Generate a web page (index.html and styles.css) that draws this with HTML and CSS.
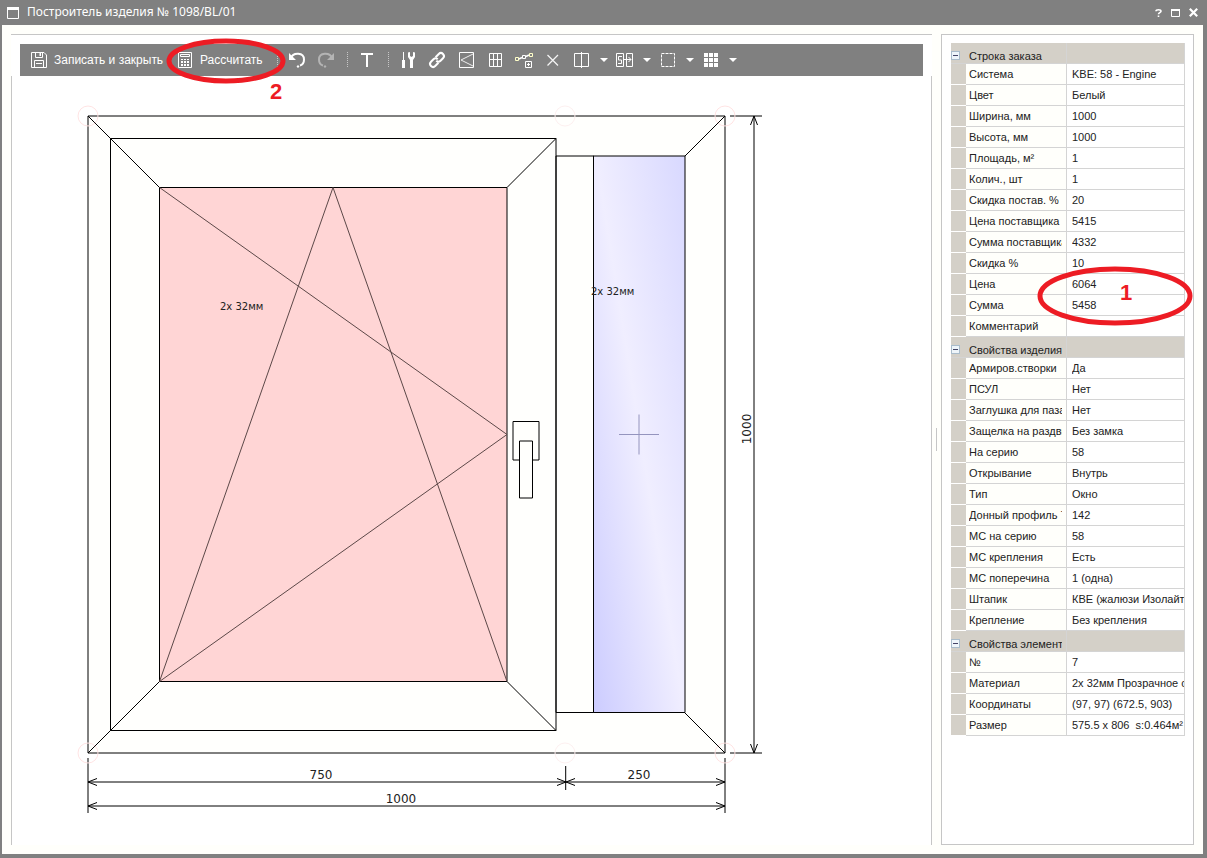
FILE: index.html
```
<!DOCTYPE html>
<html lang="ru">
<head>
<meta charset="utf-8">
<title>Построитель изделия № 1098/BL/01</title>
<link rel="stylesheet" href="styles.css">
</head>
<body>
<div class="window">
  <header class="titlebar">
    <svg class="title-icon" width="12" height="12" viewBox="0 0 12 12"><path d="M.5.5h11v11H.5z" fill="none" stroke="#fff"/><path d="M0 0h12v3H0z" fill="#fff"/></svg>
    <h1 class="title">Построитель изделия № 1098/BL/01</h1>
    <button class="win-btn" aria-label="Справка"><svg width="7" height="8" viewBox="0 0 7 8"><path d="M1 2.3C1 .3 6 .3 6 2.3 6 3.6 3.5 3.6 3.5 5.2M3.5 6.4V8" fill="none" stroke="#fff" stroke-width="1.6"/></svg></button>
    <button class="win-btn" aria-label="Развернуть"><svg width="9" height="8" viewBox="0 0 9 8"><path d="M.5.5h8v7h-8z" fill="none" stroke="#fff"/><path d="M0 0h9v2H0z" fill="#fff"/></svg></button>
    <button class="win-btn" aria-label="Закрыть"><svg width="9" height="9" viewBox="0 0 9 9"><path d="M.8.8l7.4 7.4M8.2.8L.8 8.2" stroke="#fff" stroke-width="2.2"/></svg></button>
  </header>
  <main class="content">
    <section class="editor">
      <div class="toolbar" role="toolbar">
        <button class="tool tool-save"><svg class="icon" viewBox="0 0 21 20"><path d="M2.5 2.5H15L17.500 5V17.500H2.500z" fill="none" stroke="#fff"/><path d="M6.500 2.500V7.500H13.500V2.500M5.500 17.500V10.500H14.500V17.500M7 13.500h6" fill="none" stroke="#fff"/><path d="M10.500 3h1.500v3h-1.500z" fill="#fff"/></svg><span>Записать и закрыть</span></button>
        <button class="tool tool-calc"><svg class="icon" viewBox="0 0 21 20"><path d="M3.500 2.500h13v15h-13z" fill="none" stroke="#fff"/><path d="M5.500 4.500h9v2h-9z" fill="none" stroke="#fff"/><path d="M6 9h2v1H6zM9 9h2v1H9zM12 9h2v1h-2zM6 11h2v2H6zM9 11h2v2H9zM12 11h2v2h-2zM6 14h2v2H6zM9 14h2v2H9zM12 14h2v2h-2z" fill="#fff"/></svg><span>Рассчитать</span>
          <svg class="mark mark-calc" width="120" height="48" viewBox="0 0 120 48"><ellipse cx="60" cy="24" rx="57" ry="20" fill="none" stroke="#ed1c24" stroke-width="5"/></svg>
          <span class="mark-num num-calc">2</span>
        </button>
        <span class="sep"></span>
        <button class="tool" aria-label="Отменить"><svg class="icon" viewBox="0 0 21 20"><path d="M4 8C6 2 17 2 17 9.500C17 13 15 15 13 15.500" fill="none" stroke="#fff" stroke-width="2"/><path d="M2 3v7h7zM11 15l1.500 1.500L11 18l-1.500-1.500z" fill="#fff"/></svg></button>
        <button class="tool" aria-label="Вернуть"><svg class="icon" viewBox="0 0 21 20"><path d="M16 8C14 2 3 2 3 9.500C3 13 5 15 7 15.500" fill="none" stroke="#b4b4b4" stroke-width="2"/><path d="M18 3v7h-7zM9 15l1.500 1.500L9 18l-1.500-1.500z" fill="#b4b4b4"/></svg></button>
        <span class="sep"></span>
        <button class="tool" aria-label="Текст"><svg class="icon" viewBox="0 0 21 20"><path d="M4 4h12M10 4v13" fill="none" stroke="#fff" stroke-width="2"/></svg></button>
        <span class="sep"></span>
        <button class="tool" aria-label="Инструменты"><svg class="icon" viewBox="0 0 21 20"><path d="M5 2h1v8H5zM4 10h3v8H4zM12 9h3v9h-3z" fill="#fff"/><path d="M10 2.500L10 7l2 3h3l2-3V2.500L15 2v4l-1.500 1L12 6V2z" fill="#fff"/></svg></button>
        <button class="tool" aria-label="Связь"><svg class="icon" viewBox="0 0 21 20"><g fill="none" stroke="#fff" stroke-width="2" transform="rotate(-45 10 10)"><path d="M9 13H4.500a3 3 0 0 1 0-6H8a3 3 0 0 1 3 3"/><path d="M11 7h4.500a3 3 0 0 1 0 6H12a3 3 0 0 1-3-3"/></g></svg></button>
        <button class="tool" aria-label="Открывание"><svg class="icon" viewBox="0 0 21 20"><path d="M3.500 2.500h14v15h-14z" fill="none" stroke="#fff"/><path d="M17 4L5 10l12 6" fill="none" stroke="#eee"/></svg></button>
        <button class="tool" aria-label="Раскладка"><svg class="icon" viewBox="0 0 21 20"><path d="M4.500 3.500h12v13h-12zM8.500 3.500v13M12.500 3.500v13M4.500 9.500h12" fill="none" stroke="#fff"/></svg></button>
        <button class="tool" aria-label="Добавить узел"><svg class="icon" viewBox="0 0 21 20"><path d="M5 9l3-1.500M12 6.500L15 5" stroke="#fff" stroke-width="1.500"/><path d="M8.500 5.500h3v3h-3zM11.500 11.500h6v6h-6zM14.500 13v3M13 14.500h3" fill="none" stroke="#fff"/><path d="M1.500 7.500h3v3h-3zM15.500 3.500h3v3h-3z" fill="none" stroke="#ffffc8"/></svg></button>
        <button class="tool" aria-label="Удалить"><svg class="icon" viewBox="0 0 21 20"><path d="M4.500 5L15 15.500M15 5L4.500 15.500" stroke="#f4f4f4" stroke-width="1.300"/></svg></button>
        <button class="tool" aria-label="Разделить"><svg class="icon" viewBox="0 0 21 20"><path d="M2.500 3.500h14v13h-14zM9.500 2v16" fill="none" stroke="#fff"/></svg></button>
        <button class="caret" aria-label="Варианты деления"></button>
        <button class="tool" aria-label="Сдвиг"><svg class="icon" viewBox="0 0 21 20"><path d="M1.500 3.500h7v13h-7zM11.500 3.500h6v13h-6zM7 6.500H3.500v3.500H6.500v3.500H3M8 9.500h8M13.500 7l2.500 2.500-2.500 2.500" fill="none" stroke="#fff"/></svg></button>
        <button class="caret" aria-label="Варианты сдвига"></button>
        <button class="tool" aria-label="Выделение"><svg class="icon" viewBox="0 0 21 20"><path d="M3.500 3.500h13v13h-13z" fill="none" stroke="#fff" stroke-dasharray="3 1"/></svg></button>
        <button class="caret" aria-label="Варианты выделения"></button>
        <button class="tool" aria-label="Сетка"><svg class="icon" viewBox="0 0 21 20"><path d="M3 3h4v4H3zM8 3h4v4H8zM13 3h4v4h-4zM3 8h4v4H3zM8 8h4v4H8zM13 8h4v4h-4zM3 13h4v4H3zM8 13h4v4H8zM13 13h4v4h-4z" fill="#fff"/></svg></button>
        <button class="caret" aria-label="Варианты сетки"></button>
      </div>
      <div class="canvas">
        <svg class="drawing" viewBox="12 76 919 769">
          <defs><linearGradient id="glass" gradientUnits="userSpaceOnUse" x1="552" y1="448" x2="728" y2="420"><stop offset="0" stop-color="#ccccff"/><stop offset=".5" stop-color="#f0eeff"/><stop offset="1" stop-color="#d8d8ff"/></linearGradient></defs>
          <g class="line">
            <path class="frame" d="M88 116H725V753H88z"/>
            <path d="M88 116L160 188M725 116L685 156M88 753L160 681M725 753L685 713"/>
            <path class="frame" d="M556 156H594V712.500H556zM110.500 138.500H556V730.500H110.500z"/>
            <path d="M110.500 138.500L160 188M556 138.500L507 187.500M110.500 730.500L160 681M556 730.500L507 681.500"/>
            <path fill="#ffd5d5" d="M159.500 187.500H507V681.500H159.500z"/>
            <path fill="url(#glass)" d="M593.500 156H685V712.500H593.500z"/>
            <path class="opening" d="M159.500 681.500L333 187.500L507 681.500M159.500 187.500L507 434.500L159.500 681.500"/>
            <path class="frame" d="M513 421.500H539V460H513z"/>
            <path class="frame" d="M519.500 441H532.500V498H519.500z"/>
            <path d="M730 116H762M730 753H762M754 116V753M88 758V813M725 758V813M565.700 766V790M88 782H725M88 806H725"/>
            <path d="M750.500 125L754 116L757.500 125M750.500 744L754 753L757.500 744M97 778.500L88 782L97 785.500M97 802.500L88 806L97 809.500M716 778.500L725 782L716 785.500M716 802.500L725 806L716 809.500M557 778.500L566 782L557 785.500M575 778.500L566 782L575 785.500"/>
          </g>
          <path d="M619 434.500H659M639 414.500V454.500" stroke="#9494be"/>
          <g fill="none" stroke="#ffe4e4"><circle cx="88" cy="116" r="10"/><circle cx="725" cy="116" r="10"/><circle cx="88" cy="753" r="10"/><circle cx="725" cy="753" r="10"/></g>
          <g fill="none" stroke="#fdf0f0"><circle cx="565" cy="116" r="10"/><circle cx="565" cy="753" r="10"/></g>
          <g class="dim" text-anchor="middle"><text x="321" y="779">750</text><text x="639" y="779">250</text><text x="401" y="803">1000</text><text transform="translate(751 429) rotate(-90)">1000</text></g>
          <g class="glass-label"><text x="220" y="310">2x 32мм</text><text x="591" y="295">2x 32мм</text></g>
        </svg>
      </div>
    </section>
    <div class="splitter"></div>
    <aside class="props">
      <table class="grid">
        <colgroup><col class="col-gutter"><col class="col-name"><col class="col-value"></colgroup>
        <tbody>
          <tr class="group"><td><button class="fold" aria-label="Свернуть"></button></td><th><div>Строка заказа</div></th><td></td></tr>
          <tr><td></td><th><div>Система</div></th><td><div>KBE: 58 - Engine</div></td></tr>
          <tr><td></td><th><div>Цвет</div></th><td><div>Белый</div></td></tr>
          <tr><td></td><th><div>Ширина, мм</div></th><td><div>1000</div></td></tr>
          <tr><td></td><th><div>Высота, мм</div></th><td><div>1000</div></td></tr>
          <tr><td></td><th><div>Площадь, м²</div></th><td><div>1</div></td></tr>
          <tr><td></td><th><div>Колич., шт</div></th><td><div>1</div></td></tr>
          <tr><td></td><th><div>Скидка постав. %</div></th><td><div>20</div></td></tr>
          <tr><td></td><th><div>Цена поставщика</div></th><td><div>5415</div></td></tr>
          <tr><td></td><th><div>Сумма поставщика</div></th><td><div>4332</div></td></tr>
          <tr><td></td><th><div>Скидка %</div></th><td><div>10</div></td></tr>
          <tr><td></td><th><div>Цена</div></th><td class="marked"><div>6064</div>
            <svg class="mark mark-price" width="156" height="62" viewBox="0 0 156 62"><ellipse cx="78" cy="31" rx="75" ry="27" fill="none" stroke="#ed1c24" stroke-width="5"/></svg>
            <span class="mark-num num-price">1</span></td></tr>
          <tr><td></td><th><div>Сумма</div></th><td><div>5458</div></td></tr>
          <tr><td></td><th><div>Комментарий</div></th><td></td></tr>
        </tbody>
        <tbody>
          <tr class="group"><td><button class="fold" aria-label="Свернуть"></button></td><th><div>Свойства изделия</div></th><td></td></tr>
          <tr><td></td><th><div>Армиров.створки</div></th><td><div>Да</div></td></tr>
          <tr><td></td><th><div>ПСУЛ</div></th><td><div>Нет</div></td></tr>
          <tr><td></td><th><div>Заглушка для паза</div></th><td><div>Нет</div></td></tr>
          <tr><td></td><th><div>Защелка на раздви</div></th><td><div>Без замка</div></td></tr>
          <tr><td></td><th><div>На серию</div></th><td><div>58</div></td></tr>
          <tr><td></td><th><div>Открывание</div></th><td><div>Внутрь</div></td></tr>
          <tr><td></td><th><div>Тип</div></th><td><div>Окно</div></td></tr>
          <tr><td></td><th><div>Донный профиль 7</div></th><td><div>142</div></td></tr>
          <tr><td></td><th><div>МС на серию</div></th><td><div>58</div></td></tr>
          <tr><td></td><th><div>МС крепления</div></th><td><div>Есть</div></td></tr>
          <tr><td></td><th><div>МС поперечина</div></th><td><div>1 (одна)</div></td></tr>
          <tr><td></td><th><div>Штапик</div></th><td><div>КВЕ (жалюзи Изолайт)</div></td></tr>
          <tr><td></td><th><div>Крепление</div></th><td><div>Без крепления</div></td></tr>
        </tbody>
        <tbody>
          <tr class="group"><td><button class="fold" aria-label="Свернуть"></button></td><th><div>Свойства элемента</div></th><td></td></tr>
          <tr><td></td><th><div>№</div></th><td><div>7</div></td></tr>
          <tr><td></td><th><div>Материал</div></th><td><div>2x 32мм Прозрачное ст</div></td></tr>
          <tr><td></td><th><div>Координаты</div></th><td><div>(97, 97) (672.5, 903)</div></td></tr>
          <tr><td></td><th><div>Размер</div></th><td><div>575.5 x 806&nbsp; s:0.464м²</div></td></tr>
        </tbody>
      </table>
    </aside>
  </main>
</div>
</body>
</html>
```
FILE: styles.css
```
* { box-sizing: border-box; }
body {
  margin: 0;
  background: #808080;
  font: 11px/14px "Liberation Sans", Arial, sans-serif;
  color: #222;
}
button { border: 0; padding: 0; background: none; font: inherit; color: inherit; }
svg { display: block; flex: none; }

.window { display: flex; flex-direction: column; min-height: 100vh; padding: 0 4px 4px 2px; }
.titlebar { display: flex; align-items: center; gap: 9px; height: 25px; padding: 0 5px; color: #fff; }
.title { flex: 1; margin: 0 0 2px -1px; font: 12px/16px "Noto Sans", sans-serif; white-space: nowrap; }

.content { flex: 1; display: flex; padding: 9px; background: #fffffb; }
.editor { flex: 1; min-width: 0; display: flex; flex-direction: column; padding-top: 9px; border-top: 1px solid #c6c6c6; background: #fff; }
.toolbar { display: flex; align-items: stretch; height: 32px; margin: 0 9px; background: #808080; color: #fff; }
.tool { position: relative; display: flex; align-items: center; justify-content: center; gap: 4px; width: 29px; flex: none; white-space: nowrap; font-size: 12px; }
.tool-save { width: 151px; padding-left: 9px; justify-content: flex-start; }
.tool-calc { width: 100px; padding-left: 4px; justify-content: flex-start; }
.icon { width: 21px; height: 20px; }
.sep { width: 12px; margin: 8px 0 9px; flex: none; background: repeating-linear-gradient(#c8c8c8 0 1px, transparent 1px 2px) center / 1px 100% no-repeat; }
.caret { width: 14px; flex: none; display: flex; align-items: center; justify-content: center; }
.caret::before { content: ""; border: 4px solid transparent; border-top-color: #fff; border-bottom: 0; }

.canvas { flex: 1; display: flex; border: solid #c6c6c6; border-width: 0 1px; }
.drawing { flex: 1; min-width: 0; width: 100%; }
.line { fill: none; stroke: #000; }
.frame { fill: #fffffd; }
.opening { stroke: #5c4848; stroke-width: 1; }
.dim { font: 12px "DejaVu Sans", sans-serif; fill: #222; }
.glass-label { font: 10px "DejaVu Sans", sans-serif; fill: #222; }

.splitter { width: 9px; flex: none; align-self: center; height: 23px; background: linear-gradient(#c6c6c6, #c6c6c6) center / 1px 100% no-repeat; }

.props { width: 253px; flex: none; padding: 8px; padding-left: 9px; border: 1px solid #c6c6c6; background: #fff; }
.grid { width: 100%; table-layout: fixed; border-collapse: separate; border-spacing: 0; }
.col-gutter { width: 15px; }
.col-name { width: 101px; }
.grid tr { height: 21px; }
.grid td, .grid th { height: 21px; padding: 0 0 0 5px; border-bottom: 1px solid #d4d4d4; border-right: 1px solid #d4d4d4; text-align: left; font-weight: 400; vertical-align: middle; }
.grid th { padding: 0 4px 0 3px; background: #fffffb; }
.grid td:first-child { padding: 0; border-right: 0; border-color: #fff; background: #d4d0c8; }
.grid div { overflow: hidden; white-space: nowrap; }
.grid .group td, .grid .group th { background: #d4d0c8; vertical-align: bottom; }
.grid .group td:first-child { border-color: #d4d4d4; }
.fold { display: flex; align-items: center; width: 9px; height: 9px; margin-bottom: 3px; border: 1px solid #a9bccb; background: #eef5fa; }
.fold::before { content: ""; width: 5px; height: 1px; margin-left: 1px; background: #446; }

.marked { position: relative; }
.mark { position: absolute; z-index: 2; pointer-events: none; }
.mark-calc { left: -5px; top: -7px; }
.mark-price { left: -30px; top: -9px; }
.mark-num { position: absolute; z-index: 2; font: bold 22px/22px "Liberation Sans", sans-serif; color: #ed1c24; }
.num-calc { left: 99px; top: 37px; }
.num-price { left: 53px; top: 8px; }
```
